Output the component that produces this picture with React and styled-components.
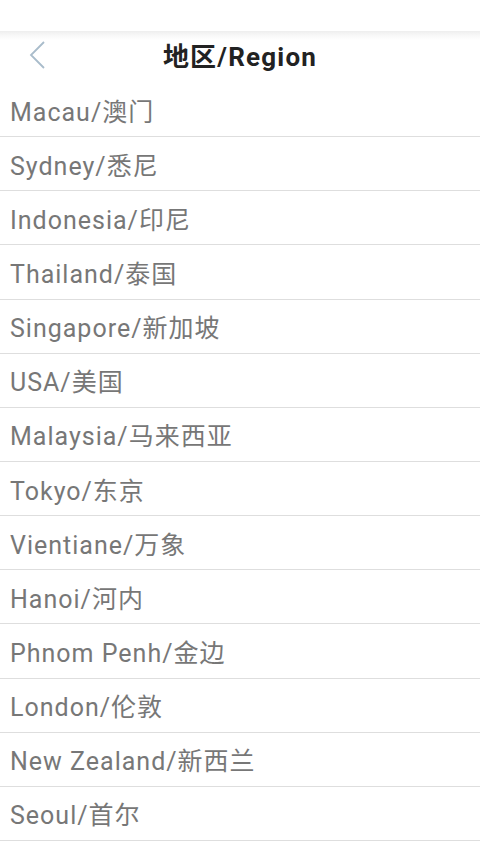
import React from 'react'
import styled, { createGlobalStyle } from 'styled-components'

const GlobalStyle = createGlobalStyle`
  html, body {
    margin: 0;
    padding: 0;
    background: #fff;
  }
  body {
    font-family: Roboto, "Noto Sans CJK SC", sans-serif;
  }
`

const StatusSpace = styled.div`
  height: 31px;
  background: #fff;
`

const Header = styled.header`
  position: relative;
  height: 52px;
  display: flex;
  align-items: center;
  justify-content: center;
  background: linear-gradient(to bottom, #eeeeee 0px, #f7f7f7 4px, #ffffff 9px);
`

const BackButton = styled.button`
  position: absolute;
  left: 26px;
  top: 8px;
  width: 24px;
  height: 32px;
  padding: 0;
  border: 0;
  background: none;
  cursor: pointer;
`

const Title = styled.h1`
  margin: 0;
  margin-top: -5px;
  font-size: 26px;
  font-weight: 700;
  letter-spacing: 1.2px;
  color: #222;
`

const List = styled.ul`
  list-style: none;
  margin: 0;
  padding: 0;
`

const Row = styled.li`
  height: 54.15px;
  display: flex;
  align-items: center;
  padding: 0 0 0 10px;
  box-sizing: border-box;
  border-bottom: 1px solid #dedede;
  font-size: 25px;
  letter-spacing: 1px;
  color: #777;
`

const regions = [
  'Macau/澳门',
  'Sydney/悉尼',
  'Indonesia/印尼',
  'Thailand/泰国',
  'Singapore/新加坡',
  'USA/美国',
  'Malaysia/马来西亚',
  'Tokyo/东京',
  'Vientiane/万象',
  'Hanoi/河内',
  'Phnom Penh/金边',
  'London/伦敦',
  'New Zealand/新西兰',
  'Seoul/首尔',
]

export default function App() {
  return (
    <>
      <GlobalStyle />
      <StatusSpace />
      <Header>
        <BackButton aria-label="back">
          <svg width="24" height="32" viewBox="0 0 24 32">
            <path d="M18 3 L5 16 L18 29" fill="none" stroke="#a9bccb" strokeWidth="1.8" />
          </svg>
        </BackButton>
        <Title>地区/Region</Title>
      </Header>
      <List>
        {regions.map((r) => (
          <Row key={r}>{r}</Row>
        ))}
      </List>
    </>
  )
}
